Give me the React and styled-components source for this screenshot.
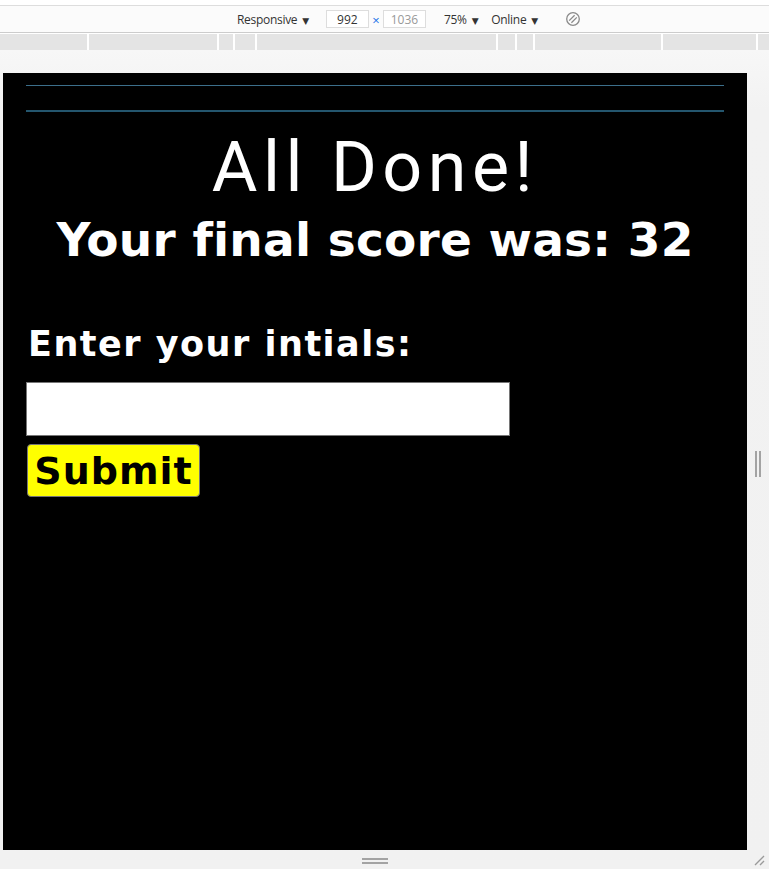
import React from "react";
import styled, { createGlobalStyle } from "styled-components";

const GlobalStyle = createGlobalStyle`
  html, body {
    margin: 0;
    padding: 0;
    background: #ffffff;
  }
  body {
    font-family: "Liberation Sans", Arial, sans-serif;
  }
`;

const Frame = styled.div`
  width: 769px;
  height: 869px;
  display: flex;
  flex-direction: column;
  overflow: hidden;
  background: #ffffff;
`;

const TopGap = styled.div`
  height: 5px;
  background: #ffffff;
`;

const Toolbar = styled.div`
  height: 26px;
  border-top: 1px solid #dddddd;
  border-bottom: 1px solid #cccccc;
  background: #fbfbfb;
  display: flex;
  align-items: center;
  padding-left: 237px;
  font-family: "Open Sans", "Liberation Sans", sans-serif;
  font-size: 12px;
  color: #333333;
`;

const Menu = styled.span`
  margin-right: ${(p) => p.gap || 11}px;
  white-space: nowrap;
  letter-spacing: -0.3px;
`;

const Arrow = styled.span`
  font-family: "DejaVu Sans", sans-serif;
  font-size: 9px;
  margin-left: 5px;
`;

const SizeBox = styled.div`
  width: 43px;
  height: 18px;
  box-sizing: border-box;
  border: 1px solid #dddddd;
  background: #ffffff;
  display: flex;
  align-items: center;
  justify-content: center;
  color: ${(p) => (p.muted ? "#999999" : "#333333")};
`;

const Times = styled.span`
  color: #1a73e8;
  font-size: 13px;
  width: 14px;
  text-align: center;
  margin-top: 2px;
`;

const Ruler = styled.div`
  margin-top: 1px;
  height: 16px;
  display: flex;
  gap: 2px;
  background: #ffffff;
`;

const RulerStep = styled.div`
  flex: ${(p) => (p.w ? `0 0 ${p.w}px` : "1")};
  background: #e4e4e4;
`;

const Stage = styled.div`
  flex: 1;
  display: grid;
  grid-template-columns: 744px 1fr;
  grid-template-rows: 777px 1fr;
  padding: 23px 0 0 3px;
  background: linear-gradient(#f7f7f7, #f2f2f2 60px, #f1f1f1);
`;

const SideHandle = styled.div`
  display: flex;
  align-items: center;
  justify-content: center;
  gap: 2px;
  padding-right: 1px;
  padding-top: 4px;
`;

const GripBar = styled.div`
  width: ${(p) => (p.flat ? "26px" : "2px")};
  height: ${(p) => (p.flat ? "2px" : "26px")};
  background: #a3a3a3;
`;

const BottomHandle = styled.div`
  display: flex;
  flex-direction: column;
  align-items: center;
  gap: 2px;
  padding-top: 8px;
`;

const Corner = styled.div`
  display: flex;
  align-items: flex-end;
  justify-content: flex-end;
  padding: 0 4px 3px 0;
`;

const Viewport = styled.div`
  background: #000000;
  padding: 12px 23px 0 23px;
  color: #ffffff;
  font-family: "DejaVu Sans", "Liberation Sans", sans-serif;
`;

const Rule = styled.hr`
  margin: 0;
  border: none;
  height: ${(p) => p.h}px;
  background: ${(p) => p.color};
`;

const Spacer = styled.div`
  height: ${(p) => p.h}px;
`;

const Title = styled.h1`
  margin: 21px 0 0;
  font-family: "Roboto", "DejaVu Sans", sans-serif;
  font-size: 70px;
  line-height: 69px;
  font-weight: 400;
  text-align: center;
  letter-spacing: 5.5px;
`;

const Score = styled.h2`
  margin: 14px 0 0;
  font-size: 47px;
  line-height: 47px;
  font-weight: 700;
  text-align: center;
  letter-spacing: 0.2px;
`;

const Label = styled.label`
  display: block;
  margin: 64px 0 0 2px;
  font-size: 35px;
  line-height: 35px;
  font-weight: 700;
  letter-spacing: 1.5px;
`;

const Initials = styled.input`
  display: block;
  margin-top: 20px;
  width: 484px;
  height: 54px;
  box-sizing: border-box;
  border: 1px solid #767676;
  background: #ffffff;
  outline: none;
`;

const SubmitButton = styled.button`
  display: block;
  margin: 8px 0 0 1px;
  width: 173px;
  height: 53px;
  box-sizing: border-box;
  background: #ffff00;
  border: 1px solid #767676;
  border-radius: 4px;
  color: #000000;
  font-family: "DejaVu Sans", "Liberation Sans", sans-serif;
  font-size: 38px;
  font-weight: 700;
  letter-spacing: 1px;
  padding: 0;
  line-height: 1;
`;

const rulerSteps = [87, 128, 14, 20, 239, 17, 16, 126, 93];

const RotateIcon = () => (
  <svg width="16" height="16" viewBox="0 0 16 16" fill="none" stroke="#8a8a8a" strokeWidth="1.3">
    <circle cx="8" cy="8" r="6.3" />
    <path d="M4.2 9.6 L9.6 4.2 M6.4 11.8 L11.8 6.4" />
  </svg>
);

const CornerIcon = () => (
  <svg width="12" height="12" viewBox="0 0 12 12" stroke="#9a9a9a" strokeWidth="1.4">
    <path d="M2 11 L11 2 M7 11 L11 7" />
  </svg>
);

const App = () => {
  return (
    <Frame>
      <GlobalStyle />
      <TopGap />
      <Toolbar>
        <Menu gap={17}>
          Responsive<Arrow>▼</Arrow>
        </Menu>
        <SizeBox>992</SizeBox>
        <Times>×</Times>
        <SizeBox muted>1036</SizeBox>
        <Menu gap={13} style={{ marginLeft: 18 }}>
          75%<Arrow>▼</Arrow>
        </Menu>
        <Menu gap={27}>
          Online<Arrow>▼</Arrow>
        </Menu>
        <RotateIcon />
      </Toolbar>
      <Ruler>
        {rulerSteps.map((w, i) => (
          <RulerStep key={i} w={w} />
        ))}
        <RulerStep />
      </Ruler>
      <Stage>
        <Viewport>
          <Rule h={1} color="#3c6f8b" />
          <Spacer h={24} />
          <Rule h={2} color="#24566e" />
          <Title>All Done!</Title>
          <Score>Your final score was: 32</Score>
          <Label htmlFor="initials">Enter your intials:</Label>
          <Initials id="initials" type="text" />
          <SubmitButton>Submit</SubmitButton>
        </Viewport>
        <SideHandle>
          <GripBar />
          <GripBar />
        </SideHandle>
        <BottomHandle>
          <GripBar flat />
          <GripBar flat />
        </BottomHandle>
        <Corner>
          <CornerIcon />
        </Corner>
      </Stage>
    </Frame>
  );
};

export default App;
